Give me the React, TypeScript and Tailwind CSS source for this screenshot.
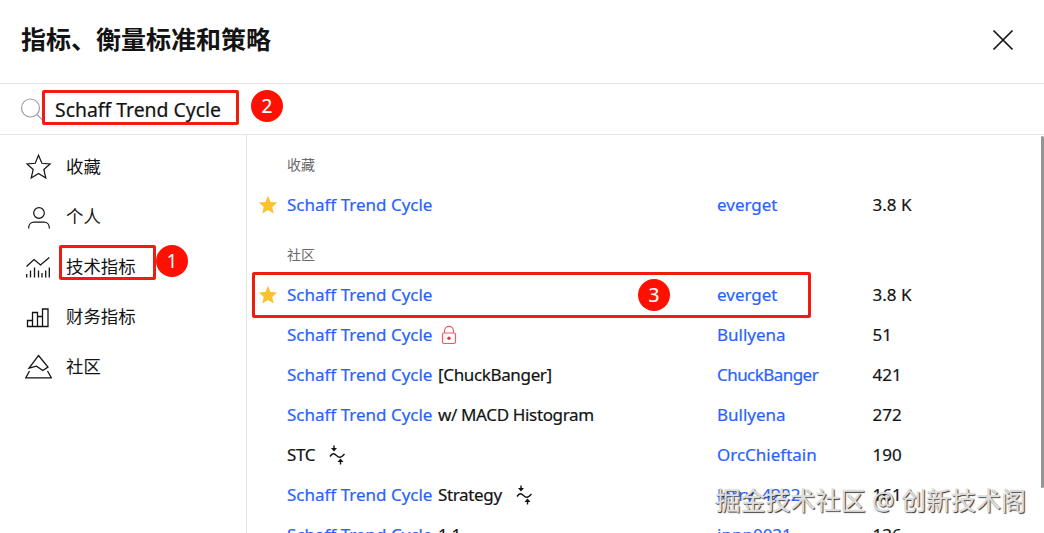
import type { ReactNode } from "react";

const categories = [
  { label: "收藏", icon: <StarIcon /> },
  { label: "个人", icon: <PersonIcon /> },
  { label: "技术指标", icon: <TechnicalsIcon />, step: 1 },
  { label: "财务指标", icon: <FinancialsIcon /> },
  { label: "社区", icon: <CommunityIcon /> },
];

type Script = {
  match?: string;
  rest?: string;
  author: string;
  likes: string;
  starred?: boolean;
  locked?: boolean;
  strategy?: boolean;
  step?: number;
};

const QUERY = "Schaff Trend Cycle";

const favorites: Script[] = [{ match: QUERY, author: "everget", likes: "3.8 K", starred: true }];

const community: Script[] = [
  { match: QUERY, author: "everget", likes: "3.8 K", starred: true, step: 3 },
  { match: QUERY, author: "Bullyena", likes: "51", locked: true },
  { match: QUERY, rest: "[ChuckBanger]", author: "ChuckBanger", likes: "421" },
  { match: QUERY, rest: "w/ MACD Histogram", author: "Bullyena", likes: "272" },
  { rest: "STC", author: "OrcChieftain", likes: "190", strategy: true },
  { match: QUERY, rest: "Strategy", author: "Jerry_4222", likes: "161", strategy: true },
  { match: QUERY, rest: "1.1", author: "jnnn0031", likes: "136" },
];

function StarIcon() {
  return (
    <svg width="28" height="28" viewBox="0 0 28 28" fill="none" stroke="#131313" strokeWidth="1.2">
      <path d="M14.5 2.2l3.4 8.1 8.2.6-6.3 5.6 2 8.5-7.3-4.5-7.3 4.5 2-8.5L3 10.9l8.2-.6z" />
    </svg>
  );
}

function PersonIcon() {
  return (
    <svg width="28" height="28" viewBox="0 0 28 28" fill="none" stroke="#131313" strokeWidth="1.2">
      <circle cx="15" cy="10" r="5.3" />
      <path d="M4.7 25.5v-1c0-3 2.3-5.3 5.3-5.3h10c3 0 5.3 2.3 5.3 5.3v1" />
    </svg>
  );
}

function TechnicalsIcon() {
  return (
    <svg width="28" height="28" viewBox="0 0 28 28" fill="none" stroke="#131313" strokeWidth="1.3">
      <path d="M2.5 13.5l7.5-7 6.5 5.5 8.800-7.500M2.700 21v3.500M6.500 17.500v7M10.500 14.500v10M14.500 17.500v7M18 20v4.500M21.700 17.500v7M25.300 14.500v10" />
    </svg>
  );
}

function FinancialsIcon() {
  return (
    <svg width="28" height="28" viewBox="0 0 28 28" fill="none" stroke="#131313" strokeWidth="1.3">
      <path d="M3.5 23.5v-6h5v6zM8.500 23.500V9.500h5v14zM13.500 23.500v-10h5v10zM18.500 23.500V6h5.500v17.500zM3.500 23.500h20.500" />
    </svg>
  );
}

function CommunityIcon() {
  return (
    <svg width="28" height="28" viewBox="0 0 28 28" fill="none" stroke="#131313" strokeWidth="1.3">
      <path d="M14.5 2.5l9.500 11.500-5.200 3.500-6.300-4.300-7.500 2zM5.500 18L1.800 24.800h25.500L23.500 18" />
    </svg>
  );
}

function LockIcon() {
  return (
    <svg className="ml-[3px]" width="16" height="20" viewBox="0 0 16 20" fill="none" stroke="#ec5a6b" strokeWidth="1.2">
      <rect x="1.5" y="8" width="13" height="10.5" rx="1.5" />
      <path d="M3.5 8V5.800a4.500 4.500 0 0 1 9 0V8" />
      <circle cx="8" cy="13.2" r="1.7" fill="#e5384d" stroke="none" />
    </svg>
  );
}

function StrategyIcon() {
  return (
    <svg className="ml-[13px]" width="18" height="22" viewBox="0 0 18 22" fill="none" stroke="#131313" strokeWidth="1.4">
      <path d="M2 12.5c2.500-3.500 4-3.500 6.500-1s4.500 2.500 8-1.500M6 1.500v4M12.500 20.500v-4" />
      <path d="M3 4h6l-3 3.500zM9.500 18h6l-3-3.500z" fill="#131313" stroke="none" />
    </svg>
  );
}

function Badge({ children, className }: { children: ReactNode; className: string }) {
  return (
    <span
      className={`absolute z-10 flex size-8 items-center justify-center rounded-full bg-[#ff1000] font-['Noto_Sans',sans-serif] text-[19px] text-white ${className}`}
    >
      {children}
    </span>
  );
}

function GroupTitle({ children }: { children: ReactNode }) {
  return <h3 className="flex h-10 items-center pl-10 text-sm text-[#6a6a6a]">{children}</h3>;
}

function Row({ script }: { script: Script }) {
  return (
    <div className="relative flex h-10 items-center text-[17px] whitespace-nowrap [-webkit-text-stroke:0.2px]">
      <div className="flex w-10 pl-[11px]">
        {script.starred && (
          <svg width="20" height="20" viewBox="0 0 20 20" fill="#f9c22e">
            <path d="M10 .8l2.600 6.200 6.600.5-5 4.400 1.500 6.500L10 14.900l-5.700 3.500 1.500-6.500-5-4.400 6.600-.5z" />
          </svg>
        )}
      </div>
      <div className="flex w-[430px] items-center">
        {script.match && <span className="w-[151px] text-[#2962ff]">{script.match}</span>}
        {script.rest && <span className="tracking-[-0.35px]">{script.rest}</span>}
        {script.locked && <LockIcon />}
        {script.strategy && <StrategyIcon />}
      </div>
      <div className={`w-[155.5px] text-[#2962ff] ${script.author === "ChuckBanger" ? "tracking-[-0.55px]" : ""}`}>
        {script.author}
      </div>
      <div>{script.likes}</div>
      {script.step && (
        <>
          <span className="absolute top-[-3px] left-[5px] h-[46px] w-[559px] rounded-xs border-3 border-[#f01c10]" />
          <Badge className="top-1 left-[391px]">{script.step}</Badge>
        </>
      )}
    </div>
  );
}

export default function App() {
  return (
    <div className="relative flex h-[533px] w-[1044px] flex-col overflow-hidden bg-white font-['Trebuchet_MS','Noto_Sans','Noto_Sans_CJK_SC',sans-serif] text-[#131313]">
      {/* Title bar */}
      <header className="flex h-[84px] shrink-0 items-center justify-between border-b border-[#e6e6e6] pr-[30px] pb-1 pl-[21px]">
        <h1 className="text-[25px] font-bold">指标、衡量标准和策略</h1>
        <svg width="22" height="22" viewBox="0 0 22 22" stroke="#131313" strokeWidth="1.7">
          <path d="M1.5 1.5l19 19M20.5 1.5l-19 19" />
        </svg>
      </header>

      {/* Search */}
      <div className="flex h-[51px] shrink-0 items-center border-b border-[#e6e6e6] pb-[3px] pl-5">
        <svg width="22" height="24" viewBox="0 0 22 24" fill="none" stroke="#a0a0a0" strokeWidth="1.2">
          <circle cx="10.5" cy="12" r="9" />
          <path d="M17 18.5l5 5" />
        </svg>
        <div className="relative flex h-[35px] w-[197px] items-center rounded-xs border-3 border-[#f01c10] pt-1 pl-[10px] text-[19.4px] whitespace-nowrap [-webkit-text-stroke:0.2px]">
          {QUERY}
          <Badge className="top-[-3px] left-[206px]">2</Badge>
        </div>
      </div>

      <div className="flex min-h-0 flex-1">
        {/* Categories */}
        <nav className="w-[247px] shrink-0 border-r border-[#e6e6e6] pt-[7px]">
          {categories.map((category) => (
            <div key={category.label} className="flex h-[50px] items-center pl-6 text-[17.4px]">
              {category.icon}
              <span className="relative mb-0.5 ml-[14px]">
                {category.label}
                {category.step && (
                  <>
                    <span className="absolute top-[-8px] left-[-7px] h-[35px] w-[97px] rounded-xs border-3 border-[#f01c10]" />
                    <Badge className="top-[-8px] left-[90px]">{category.step}</Badge>
                  </>
                )}
              </span>
            </div>
          ))}
        </nav>

        {/* Results */}
        <main className="flex-1 pt-[10px]">
          <GroupTitle>收藏</GroupTitle>
          {favorites.map((script) => (
            <Row key={script.author} script={script} />
          ))}
          <div className="pt-[10px]">
            <GroupTitle>社区</GroupTitle>
            {community.map((script, index) => (
              <Row key={index} script={script} />
            ))}
          </div>
        </main>
        <div className="mt-px h-[352px] w-[3px] rounded-full bg-[#959595]" />
      </div>

      <div className="absolute right-[18px] bottom-[15px] text-[25px] leading-9 whitespace-nowrap text-[#dedede] [-webkit-text-stroke:0.3px] [text-shadow:1px_1px_1px_#222]">
        掘金技术社区 @ 创新技术阁
      </div>
    </div>
  );
}
